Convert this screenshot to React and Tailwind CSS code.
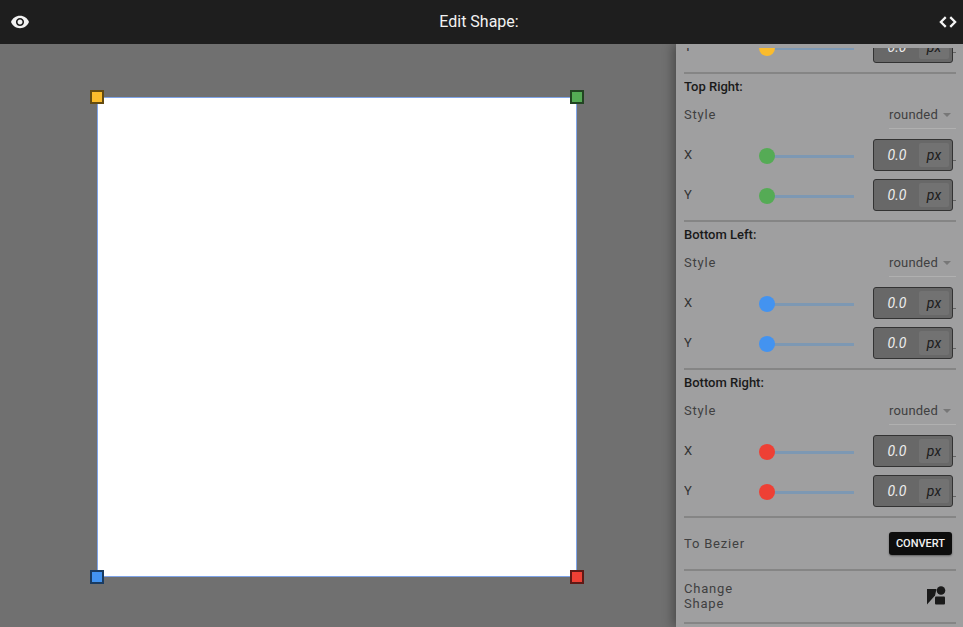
function Slider({ color }) {
  return (
    <div className="relative ml-[66px] h-4 w-[95px] shrink-0 flex items-center">
      <div className="ml-[8px] h-[3px] w-[87px] bg-[#7d98b3]" />
      <div className={"absolute left-0 top-0 h-4 w-4 rounded-full " + color} />
    </div>
  );
}

function ValueBox() {
  return (
    <div className="relative mb-[2px] ml-[19px] flex h-8 w-20 shrink-0 items-center rounded-[3px] border border-[#333333] bg-[#686868]">
      <span className="w-[45px] pl-[1px] text-center text-[14px] italic text-[#eeeeee]">0.0</span>
      <span className="flex h-6 w-[30px] items-center justify-center rounded-[2px] bg-[#727272] text-[14px] italic text-[#1c1c1c]">px</span>
      <span className="absolute right-[-4px] top-[20px] h-px w-[3px] bg-[#666666]" />
    </div>
  );
}

function AxisRow({ label, color }) {
  return (
    <div className="flex h-10 items-center">
      <span className="mb-[2px] w-[9px] text-[13px] tracking-[0.4px] text-[#333333]">{label}</span>
      <Slider color={color} />
      <ValueBox />
    </div>
  );
}

function Divider() {
  return <div className="h-[2px] bg-[#858585]" />;
}

function Section({ title, color }) {
  return (
    <div>
      <Divider />
      <div className="flex h-[28px] items-center pb-[2px] text-[13px] font-medium text-[#1a1a1a]">{title}</div>
      <div className="flex h-[27px] items-center justify-between">
        <span className="mb-[2px] text-[13px] tracking-[0.8px] text-[#404040]">Style</span>
        <div className="flex h-[27px] w-[67px] items-center justify-between border-b border-[#b0b0b0] pr-[5px]">
          <span className="text-[13px] tracking-[0.2px] text-[#404040]">rounded</span>
          <span className="h-0 w-0 border-x-[4px] border-t-[4px] border-x-transparent border-t-[#777777]" />
        </div>
      </div>
      <div className="mt-[7px]">
        <AxisRow label="X" color={color} />
        <AxisRow label="Y" color={color} />
      </div>
      <div className="h-[4px]" />
    </div>
  );
}

function Handle({ className }) {
  return <div className={"absolute h-[14px] w-[14px] border-2 border-black/60 bg-clip-border " + className} />;
}

export default function App() {
  return (
    <div className="flex h-screen w-full flex-col overflow-hidden bg-[#707070] font-['Roboto',sans-serif]">
      <header className="relative z-10 flex h-11 shrink-0 items-center justify-between bg-[#1e1e1e] pl-[11px] pr-[6px]">
        <svg width="18" height="18" viewBox="1 1 22 22" fill="#f2f2f2">
          <path d="M12 4.5C7 4.5 2.73 7.61 1 12c1.730 4.390 6 7.500 11 7.500s9.270-3.110 11-7.500c-1.730-4.390-6-7.500-11-7.500zM12 17c-2.760 0-5-2.240-5-5s2.240-5 5-5 5 2.240 5 5-2.240 5-5 5zm0-8c-1.660 0-3 1.340-3 3s1.340 3 3 3 3-1.340 3-3-1.340-3-3-3z" />
        </svg>
        <span className="mr-[10px] text-[16px] text-[#f2f2f2]">Edit Shape:</span>
        <svg width="18" height="18" viewBox="0 0 24 24" fill="none" stroke="#f5f5f5" strokeWidth="3">
          <path d="M9 5.500 2.500 12 9 18.500M15 5.500l6.500 6.500L15 18.500" />
        </svg>
      </header>
      <div className="flex min-h-0 flex-1">
        <main className="flex-1 pl-[97px] pt-[53px]">
          <div className="relative h-[480px] w-[480px] border border-[#7fa4e8] bg-white">
            <Handle className="left-[-8px] top-[-8px] bg-[#fbbc2c]" />
            <Handle className="right-[-8px] top-[-8px] bg-[#55ab55]" />
            <Handle className="bottom-[-8px] left-[-8px] bg-[#4393f0]" />
            <Handle className="bottom-[-8px] right-[-8px] bg-[#ee4035]" />
          </div>
        </main>
        <aside className="flex w-[287px] shrink-0 flex-col bg-[#9f9fa0] pl-2 pr-[7px] shadow-[-3px_0_10px_rgba(0,0,0,0.35)]">
          <div className="h-1 shrink-0" />
          <div className="min-h-0 flex-1 overflow-hidden">
            <div className="-mt-[20px]">
              <div className="pb-[4px]">
                <AxisRow label="Y" color="bg-[#fbbc2c]" />
              </div>
              <Section title="Top Right:" color="bg-[#55ab55]" />
              <Section title="Bottom Left:" color="bg-[#4393f0]" />
              <Section title="Bottom Right:" color="bg-[#ee4035]" />
              <Divider />
              <div className="flex h-[51px] items-center justify-between pr-[4px]">
                <span className="text-[13px] tracking-[0.8px] text-[#404040]">To Bezier</span>
                <button className="h-[23px] w-[63px] rounded-[3px] bg-[#0d0d0d] pt-[1px] text-[11px] font-medium text-[#f2f2f2] shadow-[0_1px_2px_rgba(0,0,0,0.4)]">CONVERT</button>
              </div>
              <Divider />
              <div className="flex h-[51px] items-center justify-between pr-[10px]">
                <span className="mb-[2px] text-[13px] leading-[15px] tracking-[0.8px] text-[#404040]">Change<br />Shape</span>
                <svg className="mb-[2px]" width="20" height="20" viewBox="0 0 20 20" fill="#1a1a1a">
                  <path d="M1 3h9.500L9 9.500 1 18.500z" />
                  <circle cx="15" cy="4.500" r="4.300" />
                  <rect x="9" y="10.500" width="10" height="8" rx="1" />
                </svg>
              </div>
              <Divider />
            </div>
          </div>
        </aside>
      </div>
    </div>
  );
}
